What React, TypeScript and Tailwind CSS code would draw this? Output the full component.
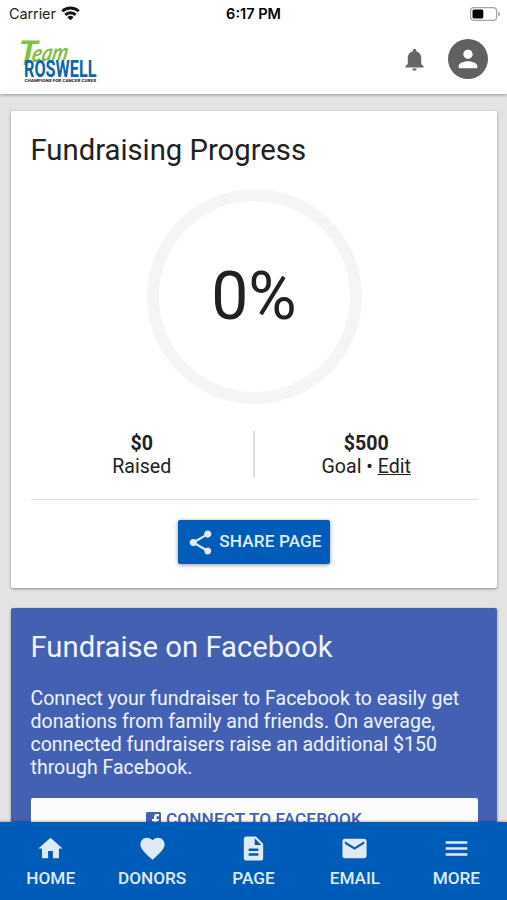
import type { ReactNode } from "react";
import {
  MdDescription,
  MdEmail,
  MdFavorite,
  MdHome,
  MdMenu,
  MdNotifications,
  MdPerson,
  MdShare,
} from "react-icons/md";

function WifiIcon() {
  return (
    <svg className="ml-[5px] h-[15px] w-[19px]" viewBox="0 0 19 15" fill="none" stroke="#111" strokeWidth="2.9">
      <path d="M1.200 5.300a12 12 0 0 1 16.600 0" />
      <path d="M4.300 8.900a7.500 7.500 0 0 1 10.400 0" />
      <path d="M9.500 14.300 6.400 11.200a4.600 4.600 0 0 1 6.200 0Z" fill="#111" stroke="none" />
    </svg>
  );
}

function BatteryIcon() {
  return (
    <svg className="h-[14px] w-[31px]" viewBox="0 0 31 14">
      <rect x=".6" y=".6" width="26" height="12.800" rx="3.500" fill="#fff" stroke="#a3a3a3" strokeWidth="1.200" />
      <rect x="2.500" y="2.500" width="10.800" height="9" rx="1.600" fill="#000" />
      <path d="M28.200 4.600c1.200.5 1.800 1.400 1.800 2.400s-.6 1.900-1.800 2.400Z" fill="#a3a3a3" />
    </svg>
  );
}

function Logo() {
  return (
    <svg className="h-[48px] w-[82px] overflow-visible" viewBox="0 0 82 48" role="img" aria-label="Team Roswell">
      <g fontFamily="Lato, sans-serif" fontStyle="italic" fontWeight="700" fill="#7fc241">
        <text transform="translate(-2.500 28.500) skewX(-5)" fontSize="34" x="0" y="0" textLength="19" lengthAdjust="spacingAndGlyphs">T</text>
        <text transform="translate(11 26) rotate(-3) skewX(-14)" fontSize="24" x="0" y="0" textLength="36" lengthAdjust="spacingAndGlyphs">eam</text>
      </g>
      <text x="4" y="40.500" fontFamily="Roboto, sans-serif" fontWeight="700" fontSize="23" fill="#0b66ae" textLength="72.500" lengthAdjust="spacingAndGlyphs">ROSWELL</text>
      <text x="4.500" y="46" fontFamily="Roboto, sans-serif" fontWeight="900" fontSize="4.200" fill="#333" textLength="71.500" lengthAdjust="spacingAndGlyphs">CHAMPIONS FOR CANCER CURES</text>
    </svg>
  );
}

function FacebookMark() {
  return (
    <svg className="h-[15px] w-[15px]" viewBox="0 0 15 15">
      <rect width="15" height="15" rx="1.500" fill="#4460b3" />
      <path d="M8 15V9.200H6V6.900h2V5.300C8 3.200 9.200 2 11.200 2h1.800v2.300h-1.300c-.9 0-1.200.4-1.200 1.200v1.400h2.400l-.4 2.300h-2V15Z" fill="#fff" />
    </svg>
  );
}

function NavItem({ icon, label }: { icon: ReactNode; label: string }) {
  return (
    <a className="flex flex-1 flex-col items-center pt-[12px] text-[#dfeaf8]">
      <span className="text-[29px] leading-none">{icon}</span>
      <span className="mt-[4px] text-[17.200px] leading-[22px] font-medium">{label}</span>
    </a>
  );
}

export default function App() {
  return (
    <div className="flex h-[900px] w-[507px] flex-col overflow-hidden bg-[#e3e3e3] font-['Roboto',sans-serif] text-[#212121]">
      <header className="relative z-10 h-[94px] shrink-0 bg-white shadow-[0_1px_3px_rgba(0,0,0,0.35)]">
        <div className="grid h-[27px] grid-cols-3 items-center font-['Inter',sans-serif] text-[14.500px] text-[#222]">
          <div className="flex items-center pl-[9px]">
            <span className="tracking-[-0.100px]">Carrier</span>
            <WifiIcon />
          </div>
          <span className="text-center font-semibold text-black">6:17 PM</span>
          <div className="flex justify-end pr-[6px]">
            <BatteryIcon />
          </div>
        </div>
        <div className="flex h-[65px] items-center justify-between pr-[19px] pl-[20px]">
          <Logo />
          <div className="flex items-center gap-[20px] pb-px">
            <MdNotifications className="size-[27px] text-[#666]" />
            <span className="flex size-[40px] items-center justify-center rounded-full bg-[#616161]">
              <MdPerson className="size-[28px] text-white" />
            </span>
          </div>
        </div>
      </header>

      <main className="min-h-0 flex-1 overflow-hidden pt-[17px] pr-[10px] pl-[11px]">
        <section className="flex h-[477px] flex-col rounded-[2px] bg-white px-[19.500px] pt-[20px] shadow-[0_1px_3px_rgba(0,0,0,0.4)]">
          <h1 className="text-[29.250px] leading-[38px]">Fundraising Progress</h1>
          <div className="mt-[20px] flex size-[215px] items-center justify-center self-center rounded-full border-[12px] border-[#f5f5f5]">
            <span className="text-[66px] leading-none">0%</span>
          </div>
          <div className="mt-[27px] flex h-[46px] text-center text-[19.600px] leading-[23px]">
            <div className="flex-1 border-r-2 border-[#dcdcdc] pt-px">
              <p className="font-bold">$0</p>
              <p>Raised</p>
            </div>
            <div className="flex-1 pt-px">
              <p className="font-bold">$500</p>
              <p>Goal • <a className="underline">Edit</a></p>
            </div>
          </div>
          <div className="mt-[22px] border-t border-[#dcdcdc]" />
          <button className="mt-[20px] flex h-[44px] w-[152px] items-center justify-center self-center rounded-[2px] bg-[#005cb9] text-[#dfeaf8] shadow-[0_1px_4px_rgba(0,0,0,0.4)]">
            <MdShare className="size-[29px]" />
            <span className="ml-[4px] text-[17.200px] font-medium tracking-[0.100px] whitespace-nowrap">SHARE PAGE</span>
          </button>
        </section>

        <section className="mt-[20px] h-[280px] rounded-[2px] bg-[#4460b3] px-[19.500px] pt-[20px] text-[#eef3ff] shadow-[0_1px_3px_rgba(0,0,0,0.4)]">
          <h2 className="text-[29.250px] leading-[38px]">Fundraise on Facebook</h2>
          <p className="mt-[21px] text-[19.520px] leading-[23.100px]">
            Connect your fundraiser to Facebook to easily get
            <br />
            donations from family and friends. On average,
            <br />
            connected fundraisers raise an additional $150
            <br />
            through Facebook.
          </p>
          <button className="mt-[19px] flex h-[43px] w-full items-center justify-center rounded-[2px] bg-[#fcfcfc] text-[#4460b3]">
            <FacebookMark />
            <span className="ml-[5px] text-[17.200px] font-medium tracking-[0.100px]">CONNECT TO FACEBOOK</span>
          </button>
        </section>
      </main>

      <nav className="relative z-10 flex h-[78px] shrink-0 bg-[#005cb9] shadow-[0_-1px_2px_rgba(0,0,0,0.25)]">
        <NavItem icon={<MdHome />} label="HOME" />
        <NavItem icon={<MdFavorite />} label="DONORS" />
        <NavItem icon={<MdDescription />} label="PAGE" />
        <NavItem icon={<MdEmail />} label="EMAIL" />
        <NavItem icon={<MdMenu />} label="MORE" />
      </nav>
    </div>
  );
}
